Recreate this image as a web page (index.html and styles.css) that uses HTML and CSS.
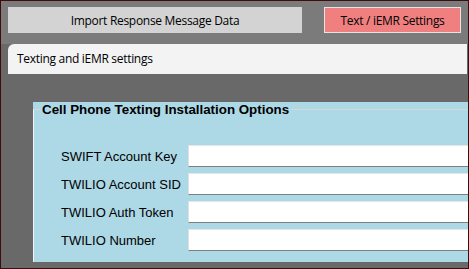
FILE: index.html
```html
<!DOCTYPE html>
<html lang="en">
<head>
  <meta charset="UTF-8" />
  <meta name="viewport" content="width=device-width, initial-scale=1.0"/>
  <title>Texting and iEMR settings</title>
  <link rel="stylesheet" href="styles.css">
</head>
<body>

<div class="window">
  <div class="toolbar">
    <button class="btn btn-import">Import Response Message Data</button>
    <button class="btn btn-active">Text / iEMR Settings</button>
  </div>

  <div class="content">
    <div class="tab">Texting and iEMR settings</div>

    <div class="panel">
      <fieldset class="group">
        <legend>Cell Phone Texting Installation Options</legend>
        <div class="fields">
          <label for="swiftKey">SWIFT Account Key</label>
          <input type="text" id="swiftKey">
          <label for="twilioSid">TWILIO Account SID</label>
          <input type="text" id="twilioSid">
          <label for="twilioToken">TWILIO Auth Token</label>
          <input type="text" id="twilioToken">
          <label for="twilioNumber">TWILIO Number</label>
          <input type="text" id="twilioNumber">
        </div>
      </fieldset>
    </div>
  </div>
</div>

</body>
</html>
```

FILE: styles.css
```css
body {
  margin: 0;
  padding: 0;
  background: #696969;
}
.window {
  width: 469px;
  height: 269px;
  box-sizing: border-box;
  border: 1px solid #3d0d0d;
  background: #696969;
  display: flex;
  flex-direction: column;
  overflow: hidden;
}
.toolbar {
  height: 43px;
  box-sizing: border-box;
  padding: 6px 0 0 7px;
  background: #7b7b7b;
  display: flex;
  align-items: flex-start;
  gap: 22px;
}
.btn {
  height: 26px;
  margin: 0;
  padding: 0;
  border: none;
  font-family: "Open Sans", sans-serif;
  font-size: 12px;
  letter-spacing: -0.3px;
  color: #000;
  cursor: pointer;
}
.btn-import {
  width: 294px;
  background: #d3d3d3;
}
.btn-active {
  width: 137px;
  background: #f08080;
  border: 1px solid #e4e4e4;
}
.content {
  flex: 1;
  display: flex;
  flex-direction: column;
}
.tab {
  height: 30px;
  margin: 0 1px 0 7px;
  padding-left: 9px;
  background: #f3f3f3;
  border-top-left-radius: 6px;
  font-family: "Open Sans", sans-serif;
  font-size: 12px;
  letter-spacing: -0.3px;
  line-height: 30px;
  color: #000;
}
.panel {
  height: 160px;
  margin: 28px 0 0 32px;
  background: #add8e6;
  display: flex;
}
.group {
  flex: 1;
  margin: 0;
  padding: 0;
  border: none;
  border-top: 1px solid #d6d6d6;
  border-left: 1px solid #eef6f9;
  min-width: 0;
}
.group legend {
  margin-left: 7px;
  padding: 0 1px;
  font-family: "Liberation Sans", Arial, sans-serif;
  font-weight: bold;
  font-size: 13.33px;
  color: #000;
}
.fields {
  display: grid;
  grid-template-columns: 127px 1fr;
  grid-auto-rows: 22px;
  row-gap: 6px;
  padding: 28px 0 0 27px;
  align-items: center;
}
.fields label {
  font-family: "Liberation Sans", Arial, sans-serif;
  font-size: 13px;
  color: #000;
}
.fields input {
  height: 22px;
  box-sizing: border-box;
  margin: 0;
  padding: 0 3px;
  background: #fff;
  border: none;
  border-top: 1px solid #e6e6e6;
  border-left: 1px solid #e0e0e0;
  border-bottom: 1px solid #7f7f7f;
  outline: none;
}
```
